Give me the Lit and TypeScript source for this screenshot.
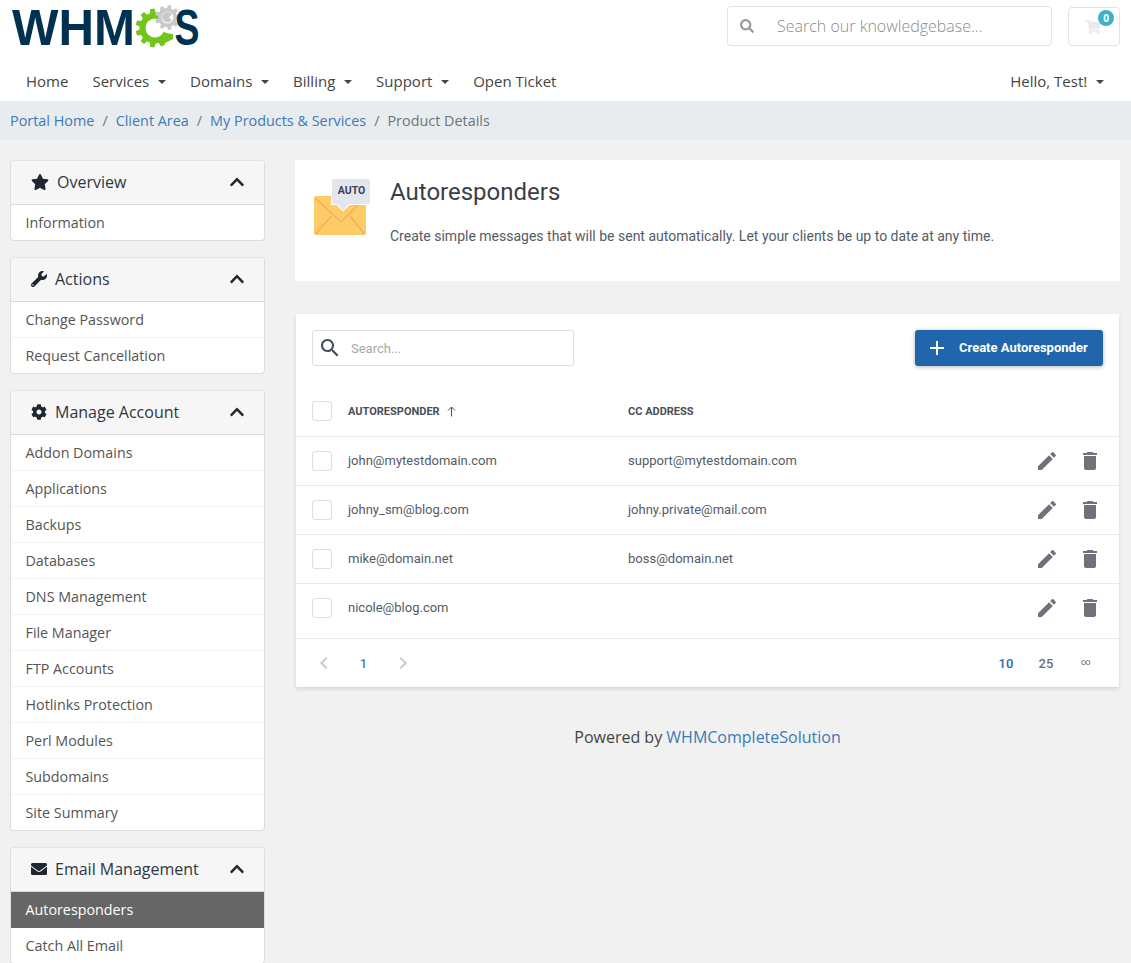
import { LitElement, html, css, svg } from "lit";
import { customElement } from "lit/decorators.js";

const ICONS: Record<string, { box: string; d: string }> = {
  star: {
    box: "0 0 576 512",
    d: "M259.3 17.8L194 150.2 47.9 171.5c-26.2 3.8-36.7 36.1-17.7 54.6l105.7 103-25 145.5c-4.5 26.3 23.2 46 46.4 33.7L288 439.6l130.7 68.7c23.2 12.2 50.9-7.4 46.4-33.7l-25-145.5 105.7-103c19-18.5 8.5-50.8-17.7-54.6L382 150.2 316.7 17.8c-11.7-23.6-45.6-23.9-57.4 0z",
  },
  wrench: {
    box: "0 0 512 512",
    d: "M507.73 109.1c-2.24-9.03-13.54-12.09-20.12-5.51l-74.36 74.36-67.88-11.31-11.31-67.88 74.36-74.36c6.62-6.62 3.43-17.9-5.66-20.16-47.38-11.74-99.55.91-136.58 37.93-39.64 39.64-50.55 97.1-34.05 147.2L18.74 402.76c-24.99 24.99-24.99 65.51 0 90.5 24.99 24.99 65.51 24.99 90.5 0l213.21-213.21c50.12 16.71 107.47 5.68 147.37-34.22 37.07-37.07 49.7-89.32 37.91-136.73zM64 472c-13.25 0-24-10.75-24-24 0-13.26 10.75-24 24-24s24 10.74 24 24c0 13.25-10.75 24-24 24z",
  },
  cog: {
    box: "0 0 512 512",
    d: "M487.4 315.7l-42.6-24.6c4.3-23.2 4.3-47 0-70.2l42.6-24.6c4.9-2.8 7.1-8.6 5.5-14-11.1-35.6-30-67.8-54.7-94.6-3.8-4.1-10-5.1-14.8-2.3L380.8 110c-17.9-15.4-38.5-27.3-60.8-35.1V25.8c0-5.6-3.9-10.5-9.4-11.7-36.7-8.2-74.3-7.8-109.2 0-5.5 1.2-9.4 6.1-9.4 11.7V75c-22.2 7.9-42.8 19.8-60.8 35.1L88.7 85.5c-4.9-2.8-11-1.9-14.8 2.3-24.7 26.7-43.6 58.9-54.7 94.6-1.7 5.4.6 11.2 5.5 14L67.3 221c-4.3 23.2-4.3 47 0 70.2l-42.6 24.6c-4.9 2.8-7.1 8.6-5.5 14 11.1 35.6 30 67.8 54.7 94.6 3.8 4.1 10 5.1 14.8 2.3l42.6-24.6c17.9 15.4 38.5 27.3 60.8 35.1v49.2c0 5.6 3.9 10.5 9.4 11.7 36.7 8.2 74.3 7.8 109.2 0 5.5-1.2 9.4-6.1 9.4-11.7v-49.2c22.2-7.9 42.8-19.8 60.8-35.1l42.6 24.6c4.9 2.8 11 1.9 14.8-2.3 24.7-26.7 43.6-58.9 54.7-94.6 1.5-5.5-.7-11.3-5.6-14.1zM256 336c-44.1 0-80-35.9-80-80s35.9-80 80-80 80 35.9 80 80-35.9 80-80 80z",
  },
  envelope: {
    box: "0 0 512 512",
    d: "M502.3 190.8c3.9-3.1 9.7-.2 9.7 4.7V400c0 26.5-21.5 48-48 48H48c-26.5 0-48-21.5-48-48V195.6c0-5 5.7-7.8 9.7-4.7 22.4 17.4 52.1 39.5 154.1 113.6 21.1 15.4 56.7 47.8 92.2 47.6 35.7.3 72-32.8 92.3-47.6 102-74.1 131.6-96.3 154-113.7zM256 320c23.2.4 56.6-29.2 73.4-41.4 132.7-96.3 142.8-104.7 173.4-128.7 5.8-4.5 9.2-11.5 9.2-18.9v-19c0-26.5-21.5-48-48-48H48C21.5 64 0 85.5 0 112v19c0 7.4 3.4 14.3 9.2 18.9 30.6 23.9 40.7 32.4 173.4 128.7 16.8 12.2 50.2 41.8 73.4 41.4z",
  },
  chevronUp: {
    box: "0 0 448 512",
    d: "M240.971 130.524l194.343 194.343c9.373 9.373 9.373 24.569 0 33.941l-22.667 22.667c-9.357 9.357-24.522 9.375-33.901.04L224 227.495 69.255 381.516c-9.379 9.335-24.544 9.317-33.901-.04l-22.667-22.667c-9.373-9.373-9.373-24.569 0-33.941L207.03 130.525c9.372-9.373 24.568-9.373 33.941-.001z",
  },
  faSearch: {
    box: "0 0 512 512",
    d: "M505 442.7L405.3 343c-4.5-4.5-10.6-7-17-7H372c27.6-35.3 44-79.7 44-128C416 93.1 322.9 0 208 0S0 93.1 0 208s93.1 208 208 208c48.3 0 92.7-16.4 128-44v16.3c0 6.4 2.5 12.5 7 17l99.7 99.7c9.4 9.4 24.6 9.4 33.9 0l28.3-28.3c9.4-9.4 9.4-24.6.1-34zM208 336c-70.7 0-128-57.2-128-128 0-70.7 57.2-128 128-128 70.7 0 128 57.2 128 128 0 70.7-57.2 128-128 128z",
  },
  cart: {
    box: "0 0 576 512",
    d: "M528.12 301.319l47.273-208C578.806 78.301 567.391 64 551.99 64H159.208l-9.166-44.81C147.758 8.021 137.93 0 126.529 0H24C10.745 0 0 10.745 0 24v16c0 13.255 10.745 24 24 24h69.883l70.248 343.435C147.325 417.1 136 435.222 136 456c0 30.928 25.072 56 56 56s56-25.072 56-56c0-15.674-6.447-29.835-16.824-40h209.647C430.447 426.165 424 440.326 424 456c0 30.928 25.072 56 56 56s56-25.072 56-56c0-22.172-12.888-41.332-31.579-50.405l5.517-24.276c3.413-15.018-8.002-29.319-23.403-29.319H218.117l-6.545-32h293.145c11.206 0 20.92-7.754 23.403-18.681z",
  },
  search: {
    box: "0 0 24 24",
    d: "M15.5 14h-.79l-.28-.27C15.41 12.59 16 11.11 16 9.5 16 5.91 13.09 3 9.5 3S3 5.91 3 9.5 5.91 16 9.5 16c1.61 0 3.09-.59 4.23-1.57l.27.28v.79l5 4.99L20.49 19l-4.99-5zm-6 0C7.01 14 5 11.99 5 9.5S7.01 5 9.5 5 14 7.01 14 9.5 11.99 14 9.5 14z",
  },
  edit: {
    box: "0 0 24 24",
    d: "M3 17.25V21h3.75L17.81 9.94l-3.75-3.75L3 17.25zM20.71 7.04c.39-.39.39-1.02 0-1.41l-2.34-2.34c-.39-.39-1.02-.39-1.41 0l-1.83 1.83 3.75 3.75 1.83-1.83z",
  },
  trash: {
    box: "0 0 24 24",
    d: "M6 19c0 1.1.9 2 2 2h8c1.1 0 2-.9 2-2V7H6v12zM19 4h-3.5l-1-1h-5l-1 1H5v2h14V4z",
  },
  plus: { box: "0 0 24 24", d: "M19 13h-6v6h-2v-6H5v-2h6V5h2v6h6v2z" },
  left: { box: "0 0 24 24", d: "M15.41 7.41L14 6l-6 6 6 6 1.41-1.41L10.83 12z" },
  right: { box: "0 0 24 24", d: "M10 6L8.59 7.41 13.17 12l-4.58 4.59L10 18l6-6z" },
};

const icon = (name: string, cls = "") => {
  const i = ICONS[name];
  return html`<svg class="icon ${cls}" viewBox=${i.box} fill="currentColor" aria-hidden="true">
    <path d=${i.d}></path>
  </svg>`;
};

// gear outline with n square-ish teeth
const gearPath = (cx: number, cy: number, outer: number, inner: number, n: number) => {
  const pts: string[] = [];
  const step = (Math.PI * 2) / n;
  for (let k = 0; k < n; k++) {
    const a = k * step;
    const corners: [number, number][] = [
      [inner, a - step * 0.32],
      [outer, a - step * 0.2],
      [outer, a + step * 0.2],
      [inner, a + step * 0.32],
    ];
    for (const [r, t] of corners) {
      pts.push(`${(cx + r * Math.cos(t)).toFixed(2)} ${(cy + r * Math.sin(t)).toFixed(2)}`);
    }
  }
  return `M${pts.join("L")}Z`;
};

const NAV = [
  { label: "Home" },
  { label: "Services", caret: true },
  { label: "Domains", caret: true },
  { label: "Billing", caret: true },
  { label: "Support", caret: true },
  { label: "Open Ticket" },
];

const PANELS = [
  { title: "Overview", icon: "star", items: ["Information"] },
  { title: "Actions", icon: "wrench", items: ["Change Password", "Request Cancellation"] },
  {
    title: "Manage Account",
    icon: "cog",
    items: [
      "Addon Domains",
      "Applications",
      "Backups",
      "Databases",
      "DNS Management",
      "File Manager",
      "FTP Accounts",
      "Hotlinks Protection",
      "Perl Modules",
      "Subdomains",
      "Site Summary",
    ],
  },
  { title: "Email Management", icon: "envelope", items: ["Autoresponders", "Catch All Email"] },
];

const ROWS = [
  ["john@mytestdomain.com", "support@mytestdomain.com"],
  ["johny_sm@blog.com", "johny.private@mail.com"],
  ["mike@domain.net", "boss@domain.net"],
  ["nicole@blog.com", ""],
];

@customElement("app-root")
export class AppRoot extends LitElement {
  static styles = css`
    :host {
      display: block;
      height: 963px;
      overflow: hidden;
      background: #f1f1f1;
      font-family: "Open Sans", sans-serif;
      font-size: 14px;
      color: #333;
    }
    * {
      box-sizing: border-box;
    }
    .icon {
      display: block;
      flex: none;
    }
    header {
      background: #fff;
      height: 101px;
      display: flex;
      flex-direction: column;
    }
    .top {
      height: 61px;
      display: flex;
      align-items: flex-start;
      padding: 6px 11px 0 11px;
    }
    .logo {
      display: block;
      width: 200px;
      height: 56px;
      margin-top: -6px;
    }
    .kb {
      margin-left: auto;
      width: 325px;
      height: 40px;
      border: 1px solid #e3e3e3;
      border-radius: 4px;
      display: flex;
      align-items: center;
      padding-left: 12px;
      color: #8c8c8c;
      font-size: 16px;
      font-weight: 300;
    }
    .kb .icon {
      width: 14px;
      height: 14px;
      color: #a09c98;
      margin-right: 23px;
    }
    .cart {
      position: relative;
      margin-left: 16px;
      margin-top: 1px;
      width: 52px;
      height: 39px;
      border: 1px solid #e3e3e3;
      border-radius: 4px;
      display: flex;
      align-items: center;
      justify-content: center;
      color: #e9e9e9;
    }
    .cart .icon {
      width: 16px;
      height: 14px;
      margin-left: -2px;
    }
    .badge {
      position: absolute;
      top: 2px;
      right: 5px;
      width: 16px;
      height: 16px;
      border-radius: 50%;
      background: #3eb1c8;
      color: #fff;
      font-size: 10px;
      font-weight: 700;
      text-align: center;
      line-height: 16px;
    }
    nav {
      display: flex;
      padding: 0 27px 0 26px;
      gap: 24px;
      font-size: 15px;
      line-height: 20px;
      color: #444;
      margin-top: 10px;
    }
    nav .item {
      display: flex;
      align-items: center;
    }
    nav .hello {
      margin-left: auto;
    }
    .caret {
      width: 0;
      height: 0;
      margin-left: 8.8px;
      margin-top: 1px;
      border-top: 4.5px solid #444;
      border-left: 4.5px solid transparent;
      border-right: 4.5px solid transparent;
    }
    .crumbs {
      height: 39px;
      background: #e9ecef;
      display: flex;
      align-items: center;
      padding-left: 10px;
      color: #6c757d;
      font-size: 14.4px;
    }
    .crumbs a {
      color: #3c7ab8;
    }
    .crumbs .sep {
      padding: 0 8px;
    }
    .body {
      display: flex;
      padding: 20px 11px 0 10px;
      gap: 30px;
    }
    aside {
      width: 255px;
      flex: none;
      display: flex;
      flex-direction: column;
      gap: 16px;
    }
    .panel {
      background: #fff;
      border: 1px solid #ddd;
      border-top-color: #e3e3e3;
      border-radius: 4px;
      overflow: hidden;
    }
    .panel-head {
      height: 44px;
      background: #f6f6f6;
      border-bottom: 1px solid #d9d9d9;
      display: flex;
      align-items: center;
      padding: 0 20px 2px;
      font-size: 16px;
      color: #2f3640;
    }
    .panel-head .lead {
      color: #1f2630;
      height: 16px;
      margin-right: 8px;
    }
    .panel-head .chev {
      margin-left: auto;
      width: 14px;
      height: 16px;
      color: #1f2630;
    }
    .panel-item {
      height: 36px;
      padding: 0 15px 0 14.5px;
      display: flex;
      align-items: center;
      color: #555;
      font-size: 14.3px;
      border-bottom: 1px solid #f2f2f2;
    }
    .panel-item:last-child {
      height: 35px;
      border-bottom: 0;
    }
    .panel-item.active {
      background: #666;
      border-bottom-color: #666;
      color: #fff;
    }
    main {
      flex: 1;
      min-width: 0;
      font-family: Roboto, sans-serif;
    }
    .intro {
      background: #fff;
      height: 121px;
      display: flex;
      padding: 19px 0 0 19px;
      gap: 20px;
    }
    .intro svg {
      width: 56px;
      height: 60px;
      flex: none;
    }
    .intro h1 {
      margin: -1px 0 0;
      font-size: 24px;
      font-weight: 400;
      line-height: 28px;
      color: #3a3f47;
    }
    .intro p {
      margin: 20px 0 0;
      font-size: 14px;
      line-height: 20px;
      color: #555b66;
    }
    .card {
      margin: 33px 1px 0;
      background: #fff;
      box-shadow: 0 2px 4px rgba(0, 0, 0, 0.12);
    }
    .tools {
      height: 72px;
      display: flex;
      align-items: flex-start;
      justify-content: space-between;
      padding: 16px 16px 0;
    }
    .search {
      width: 262px;
      height: 36px;
      border: 1px solid #dcdde6;
      border-radius: 3px;
      display: flex;
      align-items: center;
      padding-left: 5px;
      color: #a5a8ad;
      font-size: 13px;
    }
    .search .icon {
      width: 24px;
      height: 24px;
      color: #3e4a59;
      margin-right: 9px;
    }
    .btn {
      width: 188px;
      height: 36px;
      background: #2166ac;
      border-radius: 3px;
      box-shadow: 0 1px 4px rgba(0, 0, 0, 0.3);
      color: #fff;
      font-size: 13px;
      font-weight: 700;
      display: flex;
      align-items: center;
      padding-left: 10px;
    }
    .btn .icon {
      width: 24px;
      height: 24px;
      margin-right: 10px;
    }
    .btn span {
      padding-bottom: 2px;
    }
    .grid-row {
      display: grid;
      grid-template-columns: 36px 280px 1fr 92px;
      align-items: center;
      padding: 0 16px;
      border-bottom: 1px solid #e9e9ee;
      height: 49px;
      font-size: 13px;
      color: #555b66;
    }
    .grid-row .cell {
      padding-bottom: 2px;
    }
    .grid-row.head {
      height: 51px;
      font-size: 11px;
      font-weight: 700;
      color: #4a4f57;
      text-transform: uppercase;
    }
    .grid-row.last {
      height: 55px;
      padding-bottom: 6px;
    }
    .sort {
      display: flex;
      align-items: center;
      gap: 6px;
    }
    .sort svg {
      width: 11px;
      height: 11px;
    }
    .check {
      width: 20px;
      height: 20px;
      border: 1px solid #dcdde6;
      border-radius: 3px;
      background: #fff;
    }
    .actions {
      display: flex;
      justify-content: flex-end;
      gap: 19px;
      color: #6f727b;
      margin-right: 1px;
    }
    .actions .icon {
      width: 24px;
      height: 24px;
    }
    .foot {
      height: 48px;
      display: flex;
      align-items: center;
      padding: 0 16px;
      font-size: 13px;
      font-weight: 500;
    }
    .pages {
      display: flex;
      align-items: center;
      color: #2b88c8;
    }
    .pages .icon {
      width: 24px;
      height: 24px;
      color: #c9cbcf;
    }
    .pages .num {
      width: 55px;
      text-align: center;
    }
    .sizes {
      margin-left: auto;
      margin-right: -3px;
      display: flex;
      align-items: center;
      color: #6b6f77;
    }
    .sizes span {
      width: 40px;
      text-align: center;
    }
    .sizes .on {
      color: #2b6ca8;
    }
    .sizes .all {
      font-size: 9.5px;
      font-weight: 400;
      padding-bottom: 3px;
    }
    footer {
      text-align: center;
      margin-top: 39px;
      font-family: "Open Sans", sans-serif;
      font-size: 16px;
      line-height: 22px;
      color: #444;
    }
    footer a {
      color: #3c7ab8;
    }
  `;

  private renderLogo() {
    return html`<svg class="logo" viewBox="0 0 200 56" aria-label="WHMCS">
      <text
        x="1"
        y="45"
        font-family="Liberation Sans"
        font-size="50"
        font-weight="700"
        fill="#003150"
        textLength="123"
        lengthAdjust="spacingAndGlyphs"
      >WHM</text>
      ${svg`<path fill="#71c51b" d="${gearPath(144, 28, 19.5, 15.5, 11)}"></path>
        <circle cx="144" cy="28" r="9.5" fill="#fff"></circle>
        <path fill="#fff" d="M144 28L167 9V38Z"></path>
        <path fill="#71c51b" d="M154 33l8 1 0 5-10 5-3-5z"></path>
        <path fill="#c9c9c9" d="${gearPath(156.5, 17.5, 12.5, 9.5, 9)}"></path>
        <circle cx="156.5" cy="17.5" r="6" fill="#fff"></circle>
        <path fill="#c9c9c9" d="M151 17a5.5 5.5 0 0 0 10 3l-3-2.5 3-3a5.5 5.5 0 0 0-10 2.5z"></path>`}
      <text
        x="163.5"
        y="45"
        font-family="Liberation Sans"
        font-size="50"
        font-weight="700"
        fill="#003150"
        textLength="25"
        lengthAdjust="spacingAndGlyphs"
      >S</text>
    </svg>`;
  }

  private renderEnvelope() {
    return html`<svg viewBox="0 0 56 60" aria-hidden="true">
      <rect x="0" y="17" width="52" height="39" rx="2.5" fill="#fecb67"></rect>
      <path d="M1 19l26 24 24-24M1.500 55l16-18M50.500 55L36 37" fill="none" stroke="#e8b357" stroke-width="1.2"></path>
      <path d="M18 1h38v24H35l-6 6-6-6h-5z" fill="#e4e6ee" stroke="#fff" stroke-width="2"></path>
      <path d="M20 0h34a2 2 0 0 1 2 2v21a2 2 0 0 1-2 2H35l-6 6-6-6h-3a2 2 0 0 1-2-2V2a2 2 0 0 1 2-2z" fill="#e4e6ee"></path>
      <text x="37.500" y="15" text-anchor="middle" font-family="Roboto" font-size="10.500" font-weight="700" fill="#3d4250">AUTO</text>
    </svg>`;
  }

  render() {
    return html`
      <header>
        <div class="top">
          ${this.renderLogo()}
          <div class="kb">${icon("faSearch")}<span>Search our knowledgebase...</span></div>
          <div class="cart">${icon("cart")}<span class="badge">0</span></div>
        </div>
        <nav>
          ${NAV.map(
            (n) => html`<span class="item">${n.label}${n.caret ? html`<span class="caret"></span>` : ""}</span>`,
          )}
          <span class="item hello">Hello, Test!<span class="caret"></span></span>
        </nav>
      </header>
      <div class="crumbs">
        <a>Portal Home</a><span class="sep">/</span><a>Client Area</a><span class="sep">/</span>
        <a>My Products &amp; Services</a><span class="sep">/</span><span>Product Details</span>
      </div>
      <div class="body">
        <aside>
          ${PANELS.map(
            (p) => html`<div class="panel">
              <div class="panel-head">
                ${icon(p.icon, "lead")}<span>${p.title}</span>${icon("chevronUp", "chev")}
              </div>
              ${p.items.map(
                (it) => html`<div class="panel-item ${it === "Autoresponders" ? "active" : ""}">${it}</div>`,
              )}
            </div>`,
          )}
        </aside>
        <main>
          <section class="intro">
            ${this.renderEnvelope()}
            <div>
              <h1>Autoresponders</h1>
              <p>Create simple messages that will be sent automatically. Let your clients be up to date at any time.</p>
            </div>
          </section>
          <section class="card">
            <div class="tools">
              <div class="search">${icon("search")}<span>Search...</span></div>
              <div class="btn">${icon("plus")}<span>Create Autoresponder</span></div>
            </div>
            <div class="grid-row head">
              <span class="check"></span>
              <span class="sort"
                >Autoresponder
                <svg viewBox="0 0 11 11" fill="none" stroke="currentColor" stroke-width="1">
                  <path d="M5.5 10.5V1M2 4.5l3.5-3.5 3.5 3.500"></path></svg
              ></span>
              <span>CC Address</span>
              <span></span>
            </div>
            ${ROWS.map(
              (r, i) => html`<div class="grid-row ${i === ROWS.length - 1 ? "last" : ""}">
                <span class="check"></span>
                <span class="cell">${r[0]}</span>
                <span class="cell">${r[1]}</span>
                <span class="actions">${icon("edit")}${icon("trash")}</span>
              </div>`,
            )}
            <div class="foot">
              <div class="pages">${icon("left")}<span class="num">1</span>${icon("right")}</div>
              <div class="sizes">
                <span class="on">10</span><span>25</span><span class="all">∞</span>
              </div>
            </div>
          </section>
          <footer>Powered by <a>WHMCompleteSolution</a></footer>
        </main>
      </div>
    `;
  }
}
